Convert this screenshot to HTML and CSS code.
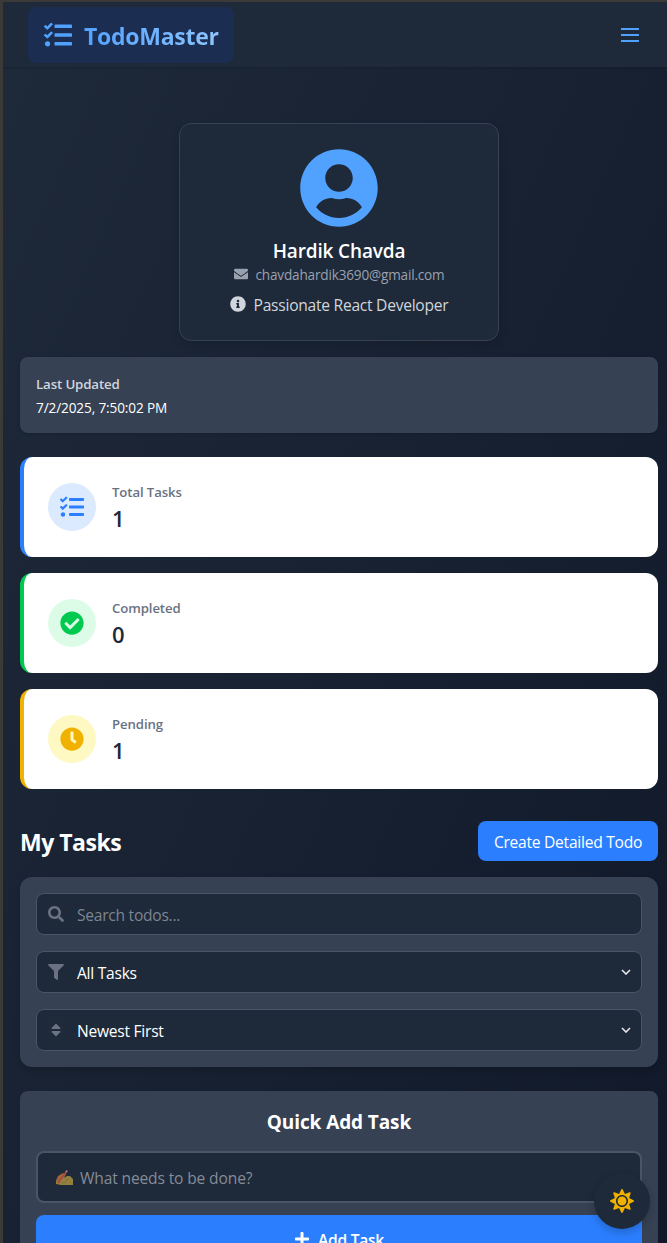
FILE: index.html
```html
<!DOCTYPE html>
<html lang="en">
<head>
<meta charset="utf-8">
<title>TodoMaster</title>
<link rel="stylesheet" href="styles.css">
</head>
<body>
<svg class="defs" width="0" height="0">
  <defs>
    <symbol id="tasks" viewBox="0 0 512 512"><path d="M139.61 35.5a12 12 0 0 0-17 0L58.93 98.81l-22.7-22.12a12 12 0 0 0-17 0L3.53 92.41a12 12 0 0 0 0 17l47.59 47.4a12.78 12.78 0 0 0 17.61 0l15.59-15.62L156.52 69a12.09 12.09 0 0 0 .09-17zm0 159.19a12 12 0 0 0-17 0l-63.68 63.72-22.7-22.1a12 12 0 0 0-17 0L3.53 252a12 12 0 0 0 0 17L51 316.5a12.77 12.77 0 0 0 17.6 0l15.7-15.69 72.2-72.22a12 12 0 0 0 .09-16.9zM64 368c-26.49 0-48.59 21.5-48.59 48S37.53 464 64 464a48 48 0 0 0 0-96zm432 16H208a16 16 0 0 0-16 16v32a16 16 0 0 0 16 16h288a16 16 0 0 0 16-16v-32a16 16 0 0 0-16-16zm0-320H208a16 16 0 0 0-16 16v32a16 16 0 0 0 16 16h288a16 16 0 0 0 16-16V80a16 16 0 0 0-16-16zm0 160H208a16 16 0 0 0-16 16v32a16 16 0 0 0 16 16h288a16 16 0 0 0 16-16v-32a16 16 0 0 0-16-16z"/></symbol>
  </defs>
</svg>
<div class="app">
  <header class="navbar">
    <a class="brand">
      <svg class="brand-icon"><use href="#tasks"/></svg>
      <span class="brand-name">TodoMaster</span>
    </a>
    <svg class="menu" viewBox="0 0 24 24"><path d="M3 6h18M3 12h18M3 18h18" stroke="currentColor" stroke-width="2"/></svg>
  </header>

  <main class="content">
    <section class="profile">
      <svg class="avatar" viewBox="0 0 496 512"><path d="M248 8C111 8 0 119 0 256s111 248 248 248 248-111 248-248S385 8 248 8zm0 96c48.6 0 88 39.4 88 88s-39.4 88-88 88-88-39.4-88-88 39.4-88 88-88zm0 344c-58.7 0-111.3-26.6-146.5-68.2 18.8-35.4 55.6-59.8 98.5-59.8 2.4 0 4.8.4 7.1 1.1 13 4.2 26.6 6.9 40.9 6.9 14.3 0 28-2.7 40.9-6.9 2.3-.7 4.7-1.1 7.1-1.1 42.9 0 79.7 24.4 98.5 59.8C359.3 421.4 306.7 448 248 448z"/></svg>
      <h2 class="profile-name">Hardik Chavda</h2>
      <p class="profile-email">
        <svg class="email-icon" viewBox="0 0 512 512"><path d="M502.3 190.8c3.9-3.1 9.7-.2 9.7 4.7V400c0 26.5-21.5 48-48 48H48c-26.5 0-48-21.5-48-48V195.6c0-5 5.7-7.8 9.7-4.7 22.4 17.4 52.1 39.5 154.1 113.6 21.1 15.4 56.7 47.8 92.2 47.6 35.7.3 72-32.8 92.3-47.6 102-74.1 131.6-96.3 154-113.7zM256 320c23.2.4 56.6-29.2 73.4-41.4 132.7-96.3 142.8-104.7 173.4-128.7 5.8-4.5 9.2-11.5 9.2-18.9v-19c0-26.5-21.5-48-48-48H48c-26.5 0-48 21.5-48 48v19c0 7.4 3.4 14.3 9.2 18.9 30.6 23.9 40.7 32.4 173.4 128.7 16.8 12.2 50.2 41.8 73.4 41.4z"/></svg>
        <span>chavdahardik3690@gmail.com</span>
      </p>
      <p class="profile-bio">
        <svg class="bio-icon" viewBox="0 0 512 512"><path d="M256 8C119.043 8 8 119.083 8 256c0 136.997 111.043 248 248 248s248-111.003 248-248C504 119.083 392.957 8 256 8zm0 110c23.196 0 42 18.804 42 42s-18.804 42-42 42-42-18.804-42-42 18.804-42 42-42zm56 254c0 6.627-5.373 12-12 12h-88c-6.627 0-12-5.373-12-12v-24c0-6.627 5.373-12 12-12h12v-64h-12c-6.627 0-12-5.373-12-12v-24c0-6.627 5.373-12 12-12h64c6.627 0 12 5.373 12 12v100h12c6.627 0 12 5.373 12 12v24z"/></svg>
        <span>Passionate React Developer</span>
      </p>
    </section>

    <section class="updated">
      <h3 class="updated-label">Last Updated</h3>
      <p class="updated-time">7/2/2025, 7:50:02 PM</p>
    </section>

    <section class="stats">
      <article class="stat stat-total">
        <div class="stat-badge"><svg class="stat-icon"><use href="#tasks"/></svg></div>
        <div class="stat-text"><p class="stat-label">Total Tasks</p><p class="stat-value">1</p></div>
      </article>
      <article class="stat stat-done">
        <div class="stat-badge"><svg class="stat-icon" viewBox="0 0 512 512"><path d="M504 256c0 136.967-111.033 248-248 248S8 392.967 8 256 119.033 8 256 8s248 111.033 248 248zM227.314 387.314l184-184c6.248-6.248 6.248-16.379 0-22.627l-22.627-22.627c-6.248-6.249-16.379-6.249-22.628 0L216 308.118l-70.059-70.059c-6.248-6.248-16.379-6.248-22.628 0l-22.627 22.627c-6.248 6.248-6.248 16.379 0 22.627l104 104c6.249 6.249 16.379 6.249 22.628.001z"/></svg></div>
        <div class="stat-text"><p class="stat-label">Completed</p><p class="stat-value">0</p></div>
      </article>
      <article class="stat stat-pending">
        <div class="stat-badge"><svg class="stat-icon" viewBox="0 0 512 512"><path d="M256,8C119,8,8,119,8,256S119,504,256,504,504,393,504,256,393,8,256,8Zm92.49,313h0l-20,25a16,16,0,0,1-22.49,2.5h0l-67-49.72a40,40,0,0,1-15-31.23V112a16,16,0,0,1,16-16h32a16,16,0,0,1,16,16V256l58,42.5A16,16,0,0,1,348.49,321Z"/></svg></div>
        <div class="stat-text"><p class="stat-label">Pending</p><p class="stat-value">1</p></div>
      </article>
    </section>

    <div class="tasks-head">
      <h1 class="tasks-title">My Tasks</h1>
      <button class="create">Create Detailed Todo</button>
    </div>

    <section class="filters">
      <div class="field">
        <svg class="field-icon" viewBox="0 0 512 512"><path d="M505 442.7L405.3 343c-4.5-4.5-10.6-7-17-7H372c27.6-35.3 44-79.7 44-128C416 93.1 322.9 0 208 0S0 93.1 0 208s93.1 208 208 208c48.3 0 92.7-16.4 128-44v16.3c0 6.4 2.5 12.5 7 17l99.7 99.7c9.4 9.4 24.6 9.4 33.9 0l28.3-28.3c9.4-9.4 9.4-24.6.1-34zM208 336c-70.7 0-128-57.2-128-128 0-70.7 57.2-128 128-128 70.7 0 128 57.2 128 128 0 70.7-57.2 128-128 128z"/></svg>
        <span class="field-text placeholder">Search todos...</span>
      </div>
      <div class="field">
        <svg class="field-icon" viewBox="0 0 512 512"><path d="M487.976 0H24.028C2.71 0-8.047 25.866 7.058 40.971L192 225.941V432c0 7.831 3.821 15.17 10.237 19.662l80 55.98C298.02 518.69 320 507.493 320 487.98V225.941l184.947-184.97C520.021 25.896 509.338 0 487.976 0z"/></svg>
        <span class="field-text">All Tasks</span>
        <svg class="chevron" viewBox="0 0 10 6"><path d="M1 1l4 4 4-4"/></svg>
      </div>
      <div class="field">
        <svg class="field-icon" viewBox="0 0 320 512"><path d="M41 288h238c21.4 0 32.1 25.9 17 41L177 448c-9.4 9.4-24.6 9.4-33.9 0L24 329c-15.1-15.1-4.4-41 17-41zm255-105L177 64c-9.4-9.4-24.6-9.4-33.9 0L24 183c-15.1 15.1-4.4 41 17 41h238c21.4 0 32.1-25.9 17-41z"/></svg>
        <span class="field-text">Newest First</span>
        <svg class="chevron" viewBox="0 0 10 6"><path d="M1 1l4 4 4-4"/></svg>
      </div>
    </section>

    <section class="quick">
      <h2 class="quick-title">Quick Add Task</h2>
      <div class="quick-input">
        <svg class="writing" viewBox="0 0 17 16">
          <path d="M0 11L2 7l5-2 2-2 1 1-2 4 3-2h3l2 2 1 1v6H5l-5-1z" fill="#93803e"/>
          <path d="M0 11l2-5 5-3 2 1-3 5-3 3z" fill="#a0653c"/>
          <path d="M2 13L10.500 1.500" stroke="#a8483f" stroke-width="1.800" fill="none"/>
          <path d="M9.500 1.500l1-1.500 1.300 1-1 1.500z" fill="#a7828b"/>
          <path d="M6 13l5-1M9 10l4-1" stroke="#7d6a37" stroke-width=".7" fill="none"/>
        </svg>
        <span>What needs to be done?</span>
      </div>
      <button class="add">
        <svg class="plus" viewBox="0 0 448 512"><path d="M416 208H272V64c0-17.67-14.33-32-32-32h-32c-17.67 0-32 14.33-32 32v144H32c-17.67 0-32 14.33-32 32v32c0 17.67 14.33 32 32 32h144v144c0 17.67 14.33 32 32 32h32c17.67 0 32-14.33 32-32V304h144c17.67 0 32-14.33 32-32v-32c0-17.67-14.33-32-32-32z"/></svg>
        <span class="add-label">Add Task</span>
      </button>
    </section>
  </main>

  <button class="theme">
    <svg class="sun" viewBox="0 0 512 512"><path d="M256 160c-52.9 0-96 43.1-96 96s43.1 96 96 96 96-43.1 96-96-43.1-96-96-96zm246.4 80.5l-94.7-47.3 33.5-100.4c4.5-13.6-8.4-26.5-21.9-21.9l-100.4 33.5-47.4-94.8c-6.4-12.8-24.6-12.8-31 0l-47.3 94.7L92.7 70.8c-13.6-4.5-26.5 8.4-21.9 21.9l33.5 100.4-94.7 47.4c-12.8 6.4-12.8 24.6 0 31l94.7 47.3-33.5 100.5c-4.5 13.6 8.4 26.5 21.9 21.9l100.4-33.5 47.3 94.7c6.4 12.8 24.6 12.8 31 0l47.3-94.7 100.4 33.5c13.6 4.5 26.5-8.4 21.9-21.9l-33.5-100.4 94.7-47.3c13-6.5 13-24.7.2-31.1zm-155.9 106c-49.9 49.9-131.1 49.9-181 0-49.9-49.9-49.9-131.1 0-181 49.9-49.9 131.1-49.9 181 0 49.9 49.9 49.9 131.1 0 181z"/></svg>
  </button>
</div>
</body>
</html>
```
FILE: styles.css
```css
* { box-sizing: border-box; margin: 0; padding: 0; }
html, body { height: 100%; overflow: hidden; }
body {
  font-family: "Open Sans", "Noto Sans", sans-serif;
  font-size: 15.6px;
  line-height: 24px;
  letter-spacing: -0.26px;
  color: #fff;
}
svg { display: block; flex: none; fill: currentColor; }
button { border: 0; font: inherit; letter-spacing: inherit; color: inherit; }
.defs { position: absolute; }
.app {
  position: relative;
  height: 1243px;
  overflow: hidden;
  border-left: 3px solid #3b3a39;
  border-top: 2px solid #3b3a39;
  background: linear-gradient(to bottom right, #1e2939, #101828) 0 0 / 100% 1500px;
}

/* Navigation */
.navbar {
  display: flex;
  align-items: center;
  justify-content: space-between;
  height: 65px;
  padding: 0 25px 0 25px;
  background: #1e2939;
  box-shadow: 0 1px 2px rgba(0, 0, 0, 0.15);
}
.brand {
  display: flex;
  align-items: center;
  gap: 12px;
  width: 206px;
  height: 56px;
  padding: 0 16px;
  border-radius: 8px;
  background: #1c2d52;
  color: #51a2ff;
}
.brand-icon { width: 28px; height: 28px; }
.brand-name {
  padding-top: 2px;
  font-size: 23px;
  font-weight: 700;
  line-height: 32px;
  background: linear-gradient(to right, #51a2ff, #8ec5ff);
  background-clip: text;
  -webkit-background-clip: text;
  color: transparent;
}
.menu { width: 24px; height: 24px; color: #51a2ff; }

.content { padding: 56px 9px 0 17px; }

/* Profile */
.profile {
  display: flex;
  flex-direction: column;
  align-items: center;
  width: 320px;
  height: 218px;
  margin: 0 auto 16px;
  padding-top: 24px;
  border: 1px solid #364153;
  border-radius: 12px;
  background: #1e2939;
  box-shadow: 0 4px 10px rgba(0, 0, 0, 0.12);
}
.avatar { height: 80px; width: 78px; color: #51a2ff; }
.profile-name { margin-top: 9px; font-size: 19px; font-weight: 600; line-height: 28px; letter-spacing: -0.15px; }
.profile-email, .profile-bio { display: flex; align-items: center; gap: 8px; }
.profile-email { font-size: 13.6px; line-height: 20px; letter-spacing: -0.19px; color: #99a1af; }
.email-icon { width: 14px; height: 14px; margin-bottom: 3px; }
.profile-bio { margin-top: 8px; color: #d1d5dc; }
.bio-icon { width: 16px; height: 16px; margin-bottom: 3px; }

/* Last update */
.updated {
  height: 76px;
  padding: 17px 16px;
  margin-bottom: 24px;
  border-radius: 8px;
  background: #364153;
  box-shadow: 0 1px 3px rgba(0, 0, 0, 0.15);
}
.updated-label { font-size: 13.3px; font-weight: 600; line-height: 20px; letter-spacing: -0.15px; color: #d1d5dc; }
.updated-time { margin-top: 4px; font-size: 13.6px; line-height: 20px; letter-spacing: -0.12px; }

/* Counters */
.stats { display: grid; gap: 16px; margin-bottom: 32px; }
.stat {
  display: flex;
  align-items: center;
  gap: 16px;
  height: 100px;
  padding-left: 24px;
  border-left: 4px solid;
  border-radius: 12px;
  background: #fff;
}
.stat-total { border-color: #2b7fff; }
.stat-done { border-color: #00c950; }
.stat-pending { border-color: #f0b100; }
.stat-badge {
  display: grid;
  place-items: center;
  width: 48px;
  height: 48px;
  border-radius: 50%;
}
.stat-total .stat-badge { background: #dbeafe; color: #2b7fff; }
.stat-done .stat-badge { background: #dcfce7; color: #00c950; }
.stat-pending .stat-badge { background: #fef9c2; color: #f0b100; }
.stat-icon { width: 24px; height: 24px; }
.stat-text { padding-top: 2px; }
.stat-label { font-size: 13.2px; font-weight: 600; line-height: 20px; letter-spacing: -0.1px; color: #6a7282; }
.stat-value { font-size: 22px; font-weight: 600; line-height: 32px; color: #1e2939; }

/* Task list */
.tasks-head {
  display: flex;
  align-items: center;
  justify-content: space-between;
  height: 40px;
  margin-bottom: 16px;
}
.tasks-title { font-size: 23px; font-weight: 700; line-height: 32px; letter-spacing: -0.5px; padding-top: 2px; }
.create {
  width: 180px;
  height: 40px;
  padding-top: 2px;
  border-radius: 8px;
  background: #2b7fff;
  white-space: nowrap;
}
.filters {
  display: grid;
  gap: 16px;
  padding: 16px;
  margin-bottom: 24px;
  border-radius: 12px;
  background: #364153;
  box-shadow: 0 4px 6px rgba(0, 0, 0, 0.12);
}
.field {
  display: flex;
  align-items: center;
  height: 42px;
  padding: 0 10px 0 11px;
  border: 1px solid #4a5565;
  border-radius: 8px;
  background: #1e2939;
}
.field-icon { width: 16px; height: 16px; margin-right: 13px; color: #6a7282; }
.field-text { flex: 1; padding-top: 2px; }
.placeholder { color: #7d8591; }
.chevron { width: 10px; height: 6px; margin-bottom: 1px; fill: none; stroke: #e5e7eb; stroke-width: 1.6; }

/* Quick add */
.quick {
  height: 190px;
  padding: 17px 16px;
  border-radius: 8px;
  background: #364153;
}
.quick-title {
  font-size: 19px;
  font-weight: 700;
  line-height: 28px;
  letter-spacing: -0.1px;
  text-align: center;
  margin-bottom: 15px;
}
.quick-input {
  display: flex;
  align-items: center;
  gap: 7px;
  height: 52px;
  padding: 2px 18px 0;
  margin-bottom: 12px;
  border: 2px solid #4a5565;
  border-radius: 8px;
  background: #1e2939;
  letter-spacing: -0.15px;
  color: #858c97;
}
.writing { width: 17px; height: 16px; }
.add {
  display: flex;
  align-items: center;
  justify-content: center;
  gap: 8px;
  width: 100%;
  height: 48px;
  border-radius: 8px;
  background: #2b7fff;
  font-weight: 600;
}
.add-label { padding-top: 2px; }
.plus { width: 16px; height: 16px; }

/* Theme toggle floats over the page */
.theme {
  position: absolute;
  right: 17px;
  bottom: 14px;
  display: grid;
  place-items: center;
  width: 56px;
  height: 56px;
  border-radius: 50%;
  background: #1e2939;
  color: #f0b100;
  box-shadow: 0 4px 8px rgba(0, 0, 0, 0.2);
}
.sun { width: 24px; height: 24px; }
```
